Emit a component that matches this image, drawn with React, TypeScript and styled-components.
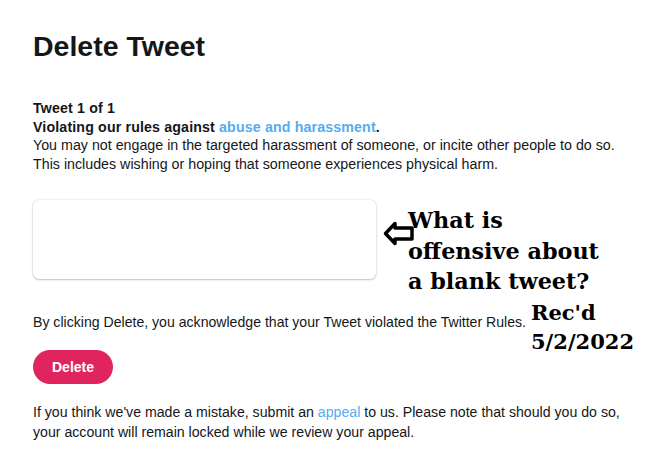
import React from "react";
import styled, { createGlobalStyle } from "styled-components";

const Global = createGlobalStyle`
  html, body { margin: 0; padding: 0; background: #fff; }
  body { font-family: "Liberation Sans", Arial, sans-serif; color: #14171a; }
`;

const Page = styled.div`
  position: relative;
  width: 656px;
  height: 457px;
  overflow: hidden;
  padding: 28px 0 0 33px;
  box-sizing: border-box;
`;

const Title = styled.h1`
  margin: 0;
  font-size: 28.5px;
  line-height: 36px;
  font-weight: 700;
`;

const Section = styled.div`
  margin-top: 35px;
  font-size: 14.25px;
  line-height: 18.5px;
`;

const Bold = styled.div`
  font-weight: 700;
  font-size: 14.2px;
  letter-spacing: 0.15px;
`;

const Link = styled.a`
  color: #55acee;
  text-decoration: none;
`;

const EmptyTweet = styled.div`
  margin-top: 27px;
  width: 343px;
  height: 79px;
  border-radius: 6px;
  background: #fff;
  box-shadow: 0 0 2px rgba(0, 0, 0, 0.18), 0 1px 2px rgba(0, 0, 0, 0.2);
`;

const Acknowledge = styled.p`
  margin: 34px 0 0;
  font-size: 14.1px;
  line-height: 18px;
`;

const DeleteButton = styled.button`
  margin-top: 19px;
  width: 80px;
  height: 34px;
  border: none;
  border-radius: 17px;
  background: #e0245e;
  color: #fff;
  font-family: "Liberation Sans", Arial, sans-serif;
  font-weight: 700;
  font-size: 14px;
  padding: 0;
`;

const Footer = styled.p`
  margin: 18px 0 0;
  font-size: 14.15px;
  line-height: 20px;
`;

const Note = styled.div<{ $top: number; $left: number }>`
  position: absolute;
  top: ${(p) => p.$top}px;
  left: ${(p) => p.$left}px;
  font-family: "DejaVu Serif", Georgia, serif;
  font-weight: 700;
  color: #000;
  font-size: 22.3px;
  line-height: 30.5px;
  white-space: nowrap;
`;

const SmallNote = styled(Note)`
  font-size: 21px;
  line-height: 29px;
`;

const Arrow = styled.svg`
  position: absolute;
  left: 382px;
  top: 220px;
`;

export default function App() {
  return (
    <>
      <Global />
      <Page>
        <Title>Delete Tweet</Title>
        <Section>
          <Bold>Tweet 1 of 1</Bold>
          <Bold>
            Violating our rules against <Link href="#">abuse and harassment</Link>.
          </Bold>
          <div>You may not engage in the targeted harassment of someone, or incite other people to do so.</div>
          <div>This includes wishing or hoping that someone experiences physical harm.</div>
        </Section>
        <EmptyTweet />
        <Acknowledge>By clicking Delete, you acknowledge that your Tweet violated the Twitter Rules.</Acknowledge>
        <DeleteButton>Delete</DeleteButton>
        <Footer>
          If you think we've made a mistake, submit an <Link href="#">appeal</Link> to us. Please note that should you do so,
          <br />
          your account will remain locked while we review your appeal.
        </Footer>
        <Arrow width="34" height="28" viewBox="0 0 34 28">
          <path
            d="M3.5 13.5 L13 3.5 L13 8 L30 8 L30 19 L13 19 L13 23.5 Z"
            fill="none"
            stroke="#000"
            strokeWidth="3.5"
            strokeLinejoin="round"
          />
        </Arrow>
        <Note $top={205} $left={408}>
          What is
          <br />
          offensive about
          <br />a blank tweet?
        </Note>
        <SmallNote $top={298} $left={531}>
          Rec'd
          <br />
          5/2/2022
        </SmallNote>
      </Page>
    </>
  );
}
